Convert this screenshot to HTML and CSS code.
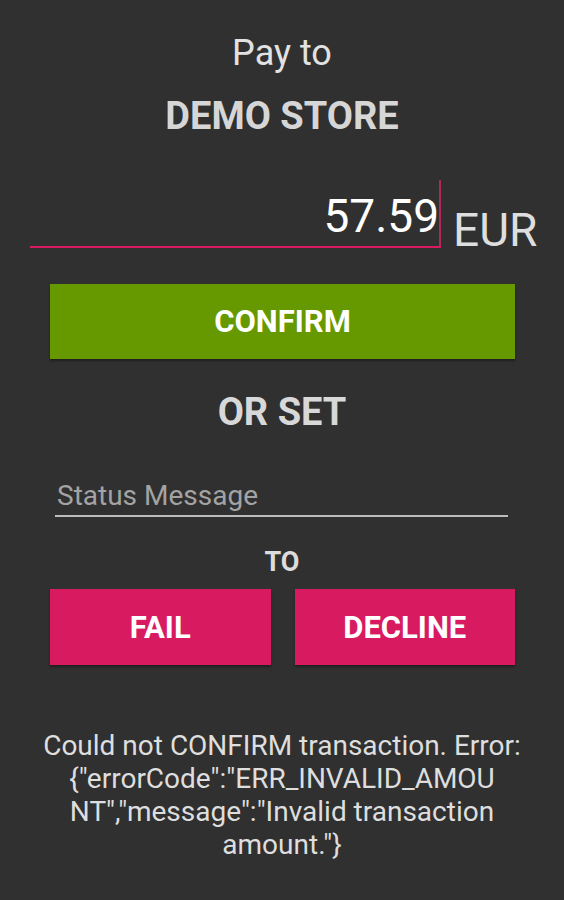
FILE: index.html
```html
<!DOCTYPE html>
<html>
  <head>
    <title>Pay to DEMO STORE</title>
    <link rel="stylesheet" href="styles.css">
  </head>
  <body>
    <div class="screen">
      <div class="pay-label">Pay to</div>
      <div class="store-name">DEMO STORE</div>

      <div class="amount-row">
        <div class="amount-field">
          <span class="amount-value">57.59</span>
          <span class="cursor"></span>
        </div>
        <div class="currency">EUR</div>
      </div>

      <button class="btn btn-confirm">CONFIRM</button>

      <div class="or-set">OR SET</div>

      <div class="status-field">
        <span class="placeholder">Status Message</span>
      </div>

      <div class="to-label">TO</div>

      <div class="btn-row">
        <button class="btn btn-fail">FAIL</button>
        <button class="btn btn-fail">DECLINE</button>
      </div>

      <p class="error-text">Could not CONFIRM transaction. Error:<br>{"errorCode":"ERR_INVALID_AMOU<br>NT","message":"Invalid transaction<br>amount."}</p>
    </div>
  </body>
</html>
```

FILE: styles.css
```css
body { margin: 0; background: #303030; font-family: Roboto, "Liberation Sans", sans-serif; color: #dcdcdc; }

.screen { display: flex; flex-direction: column; padding-top: 32px; height: 900px; box-sizing: border-box; }

.pay-label { text-align: center; font-size: 36px; line-height: 42px; color: #e2e2e2; }
.store-name { text-align: center; font-size: 38px; line-height: 44px; font-weight: bold; margin-top: 20px; color: #d6d6d6; }

/* amount input, android style */
.amount-row { display: flex; align-items: flex-end; margin: 42px 0 0 30px; }
.amount-field { display: flex; justify-content: flex-end; align-items: stretch; width: 411px; padding-top: 9px; padding-bottom: 3px; border-bottom: 2px solid #d81b60; box-sizing: border-box; height: 68px; }
.amount-value { font-size: 46px; line-height: 54px; color: #ffffff; }
.cursor { width: 2px; margin-top: -9px; margin-bottom: -3px; background: #b0285a; }
.currency { font-size: 46px; line-height: 46px; margin: 0 0 -5px 12px; color: #dedede; }

.btn { border: none; margin: 0; padding: 0; font-family: inherit; font-weight: bold; color: #fff; font-size: 31px; height: 75px; box-shadow: 0 2px 2px rgba(0, 0, 0, 0.35); }
.btn-confirm { background: #669900; margin: 36px 49px 0 50px; }

.or-set { text-align: center; font-size: 38px; line-height: 44px; font-weight: bold; margin-top: 31px; color: #d8d8d8; }

.status-field { margin: 45px 56px 0 55px; padding: 0 0 2px 2px; border-bottom: 2px solid #bcbcbc; }
.placeholder { font-size: 28px; line-height: 34px; color: #a3a3a3; display: block; }

.to-label { text-align: center; font-size: 27px; line-height: 32px; font-weight: bold; margin-top: 29px; color: #dcdcdc; }

.btn-row { display: flex; gap: 24px; margin: 11px 49px 0 50px; }
.btn-row .btn { flex: 1; height: 76px; }
.btn-fail { background: #d81b60; }

.error-text { margin: 64px 0 0; text-align: center; font-size: 28px; line-height: 33px; color: #dedede; }
```
